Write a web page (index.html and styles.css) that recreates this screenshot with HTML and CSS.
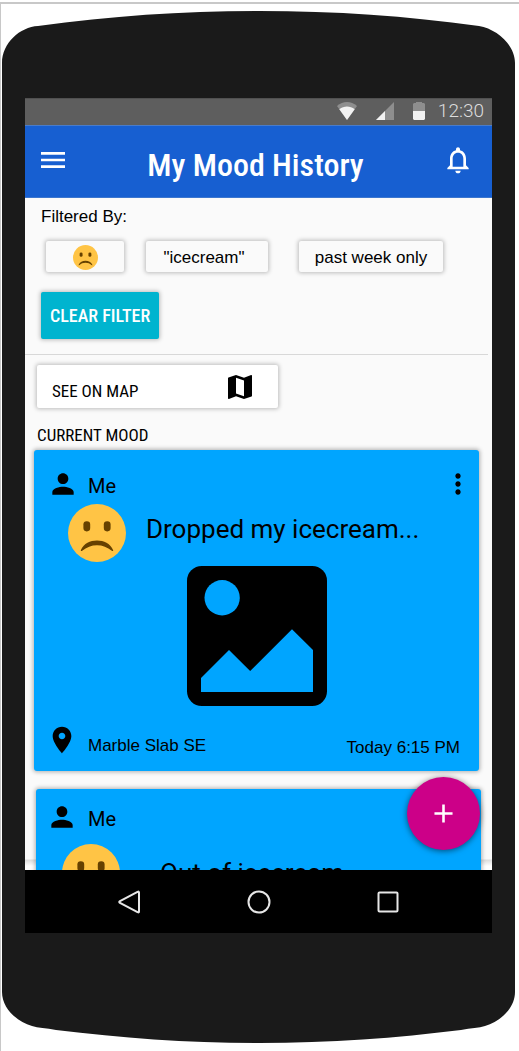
FILE: index.html
```html
<!DOCTYPE html>
<html lang="en">
<head>
<meta charset="utf-8">
<meta name="viewport" content="width=device-width, initial-scale=1">
<title>My Mood History</title>
<link rel="stylesheet" href="styles.css">
</head>
<body>
<svg class="defs" aria-hidden="true">
  <symbol id="face" viewBox="0 0 58 58">
    <circle cx="29" cy="29" r="29" fill="#ffc445"/>
    <rect x="15.4" y="17.2" width="6.8" height="10.2" rx="3.3" fill="#664100"/>
    <rect x="35.8" y="17.2" width="6.8" height="10.2" rx="3.3" fill="#664100"/>
    <path d="M12.8 46.2C16 39.5 22 36.6 29 36.6S42 39.5 45.200 46.200C45.300 47.200 44.400 47.300 43.800 46.800C39.500 43.200 34.500 41.200 29 41.200S18.500 43.200 14.200 46.800C13.600 47.300 12.700 47.200 12.800 46.200Z" fill="#664100"/>
  </symbol>
  <symbol id="person" viewBox="0 0 24 24">
    <path d="M12 12c2.210 0 4-1.790 4-4s-1.790-4-4-4-4 1.790-4 4 1.790 4 4 4zm0 2c-2.670 0-8 1.340-8 4v2h16v-2c0-2.660-5.330-4-8-4z"/>
  </symbol>
</svg>
<div class="phone">
  <svg class="cap" height="87" viewBox="0 0 513 87" preserveAspectRatio="none" aria-hidden="true">
    <path d="M0 88V52C0 32 18 16 36 15L36 15C110 5 180 0 257 0S404 5 477 15C495 18 513 34 513 52V88Z" fill="#1a1a1a"/>
  </svg>
  <div class="body">
    <div class="screen">
      <div class="status">
        <svg width="20" height="18" viewBox="0 0 20 18" aria-label="Wi-Fi"><path d="M0 4C6-1.300 14-1.300 20 4L10 18Z" fill="#8e8e8e"/><path d="M2.300 7.200C7 3.500 13 3.500 17.700 7.200L10 18Z" fill="#f2f2f2"/></svg>
        <svg width="18" height="18" viewBox="0 0 18 18" aria-label="Signal"><path d="M18 0V18H0Z" fill="#8e8e8e"/><path d="M9 9V18H0Z" fill="#f2f2f2"/></svg>
        <svg width="12" height="18" viewBox="0 0 12 18" aria-label="Battery"><path d="M3 0H9V1H11L12 2V9H0V2L1 1H3Z" fill="#8e8e8e"/><path d="M0 9H12V17L11 18H1L0 17Z" fill="#f2f2f2"/></svg>
        <time class="clock">12:30</time>
      </div>
      <header class="appbar">
        <button class="icon-btn" aria-label="Menu"><svg width="32" height="32" viewBox="0 0 24 24" fill="#fff"><path d="M3 18h18v-2H3v2zm0-5h18v-2H3v2zm0-7v2h18V6H3z"/></svg></button>
        <h1 class="title">My Mood History</h1>
        <button class="icon-btn" aria-label="Notifications"><svg width="32" height="32" viewBox="0 0 24 24" fill="#fff"><path d="M12 22c1.100 0 2-.9 2-2h-4c0 1.100.9 2 2 2zm6-6v-5c0-3.070-1.630-5.640-4.500-6.320V4c0-.83-.67-1.500-1.500-1.500s-1.500.67-1.500 1.500v.68C7.640 5.360 6 7.920 6 11v5l-2 2v1h16v-1l-2-2zm-2 1H8v-6c0-2.480 1.510-4.500 4-4.500s4 2.020 4 4.500v6z"/></svg></button>
      </header>
      <main class="feed">
        <section class="filters">
          <h2 class="filters-label">Filtered By:</h2>
          <div class="chips">
            <button class="chip chip-face" aria-label="Sad mood"><svg width="25" height="25"><use href="#face"/></svg></button>
            <button class="chip chip-word">"icecream"</button>
            <button class="chip chip-week">past week only</button>
          </div>
          <button class="clear">CLEAR FILTER</button>
        </section>
        <section class="moods">
          <button class="map-btn"><span class="map-label">SEE ON MAP</span><svg width="32" height="32" viewBox="0 0 24 24" aria-hidden="true"><path d="M20.500 3l-.16.030L15 5.100 9 3 3.360 4.900c-.21.070-.36.250-.36.480V20.500c0 .28.220.5.5.5l.16-.03L9 18.900l6 2.100 5.640-1.900c.21-.07.36-.25.36-.48V3.500c0-.28-.22-.5-.5-.5zM15 19l-6-2.110V5l6 2.110V19z"/></svg></button>
          <h2 class="heading">CURRENT MOOD</h2>
          <article class="card">
            <div class="card-head">
              <svg width="32" height="32" aria-hidden="true"><use href="#person"/></svg>
              <span class="who">Me</span>
              <button class="icon-btn" aria-label="More options"><svg width="32" height="32" viewBox="0 0 24 24"><path d="M12 8c1.100 0 2-.9 2-2s-.9-2-2-2-2 .9-2 2 .9 2 2 2zm0 2c-1.100 0-2 .9-2 2s.9 2 2 2 2-.9 2-2-.9-2-2-2zm0 6c-1.100 0-2 .9-2 2s.9 2 2 2 2-.9 2-2-.9-2-2-2z"/></svg></button>
            </div>
            <div class="mood">
              <svg width="58" height="58" aria-hidden="true"><use href="#face"/></svg>
              <h3 class="reason">Dropped my icecream...</h3>
            </div>
            <svg class="photo" width="140" height="140" viewBox="0 0 18 18" aria-label="Photo"><rect width="18" height="18" rx="1.900"/><circle cx="4.520" cy="4.080" r="2.270" fill="#00a5ff"/><path d="M1.800 14.400L5.400 10.800 8.120 13.500 13.500 8.130 16.200 10.800V16.200H1.800Z" fill="#00a5ff"/></svg>
            <div class="card-foot">
              <svg width="32" height="32" viewBox="0 0 24 24" aria-hidden="true"><path d="M12 2C8.130 2 5 5.130 5 9c0 5.250 7 13 7 13s7-7.750 7-13c0-3.870-3.130-7-7-7zm0 9.500c-1.380 0-2.500-1.120-2.500-2.500s1.120-2.500 2.500-2.500 2.500 1.120 2.500 2.500-1.120 2.500-2.500 2.500z"/></svg>
              <span class="place">Marble Slab SE</span>
              <time class="when">Today 6:15 PM</time>
            </div>
          </article>
          <article class="card card-next">
            <div class="card-head">
              <svg width="32" height="32" aria-hidden="true"><use href="#person"/></svg>
              <span class="who">Me</span>
            </div>
            <div class="mood">
              <svg width="58" height="58" aria-hidden="true"><use href="#face"/></svg>
              <h3 class="reason">Out of icecream...</h3>
            </div>
          </article>
        </section>
        <button class="fab" aria-label="Add mood"><svg width="31" height="31" viewBox="0 0 24 24" fill="#fff"><path d="M19 13h-6v6h-2v-6H5v-2h6V5h2v6h6v2z"/></svg></button>
      </main>
      <nav class="navbar">
        <button class="icon-btn" aria-label="Back"><svg width="26" height="26" viewBox="0 0 26 26"><path d="M23 3.500V22.500Q23 24 21.500 23L4 14Q2.500 13 4 12L21.500 3Q23 2 23 3.500Z"/></svg></button>
        <button class="icon-btn" aria-label="Home"><svg width="26" height="26" viewBox="0 0 26 26"><circle cx="13" cy="13" r="10.500"/></svg></button>
        <button class="icon-btn" aria-label="Recent apps"><svg width="26" height="26" viewBox="0 0 26 26"><rect x="3.500" y="3.500" width="19" height="19" rx="1"/></svg></button>
      </nav>
    </div>
  </div>
  <svg class="cap" height="110" viewBox="0 0 513 110" preserveAspectRatio="none" aria-hidden="true">
    <path d="M0-1V59C0 75 14 88 30 93C36 95 44 95 54 97C120 105 185 110 257 110S394 105 459 97C469 95 477 95 483 93C499 88 513 75 513 59V-1Z" fill="#1a1a1a"/>
  </svg>
</div>
</body>
</html>
```
FILE: styles.css
```css
* {
  box-sizing: border-box;
}

body {
  margin: 0;
  padding-top: 2px;
  background: #fff;
  color: #000;
  font-family: "Liberation Sans", Arial, sans-serif;
  font-size: 17px;
}

button {
  margin: 0;
  padding: 0;
  border: 0;
  background: none;
  color: inherit;
  font: inherit;
}

svg {
  display: block;
  flex: none;
}

h1,
h2,
h3 {
  margin: 0;
  font-weight: 400;
}

.defs {
  position: absolute;
  width: 0;
  height: 0;
}

.phone {
  display: flex;
  flex-direction: column;
  height: calc(100vh - 2px);
  min-height: 700px;
  padding: 7px 4px 8px 1px;
  border-top: 2px solid #c8c8c8;
  border-left: 1px solid #c8c8c8;
}

.cap {
  width: 100%;
}

.body {
  flex: 1;
  min-height: 0;
  padding: 0 23px;
  background: #1a1a1a;
}

.screen {
  display: flex;
  flex-direction: column;
  height: 100%;
}

.status {
  display: flex;
  align-items: center;
  justify-content: flex-end;
  gap: 19px;
  height: 27px;
  padding: 0 8px 2px 0;
  border-top: 1px solid #505050;
  background: #5e5e5e;
}

.clock {
  margin-left: -6px;
  color: #ddd;
  font: 300 19px/24px Roboto, sans-serif;
}

.appbar {
  display: flex;
  align-items: center;
  height: 73px;
  padding: 0 18px 4px 12px;
  border-top: 1px solid #4a7cc9;
  border-bottom: 1px solid #3c76cf;
  background: #175fd1;
}

.title {
  flex: 1;
  padding-top: 11px;
  color: #fff;
  font: 500 32px/40px "Roboto Condensed", "Liberation Sans Narrow", Roboto, sans-serif;
  text-align: center;
  white-space: nowrap;
}

.feed {
  position: relative;
  flex: 1;
  min-height: 0;
  overflow: hidden;
  background: linear-gradient(to top, #fff 0, #fff 4px, #ddd 10px, #fafafa 11px);
}

.filters {
  margin-right: 4px;
  padding: 8px 0 15px 16px;
  border-bottom: 1px solid #d8d8d8;
}

.filters-label {
  font-size: 17px;
  line-height: 22px;
}

.chips {
  display: flex;
  margin: 13px 0 20px 5px;
}

.chip,
.map-btn,
.clear {
  border-radius: 2px;
  box-shadow: 0 0 4px 1px rgba(0, 0, 0, 0.25);
}

.chip {
  display: flex;
  align-items: center;
  justify-content: center;
  height: 31px;
  padding-top: 3px;
  background: #fafafa;
  white-space: nowrap;
}

.chip-face {
  width: 78px;
  padding-top: 2px;
}

.chip-word {
  width: 122px;
  margin-left: 22px;
  padding-right: 6px;
}

.chip-week {
  width: 144px;
  margin-left: 31px;
}

.clear {
  display: block;
  height: 47px;
  padding: 0 9px;
  background: #00b4cf;
  color: #fff;
  font: 500 18px/24px "Roboto Condensed", "Liberation Sans Narrow", Roboto, sans-serif;
}

.moods {
  padding: 10px 13px 0 9px;
}

.map-btn {
  display: flex;
  align-items: center;
  justify-content: space-between;
  width: 241px;
  height: 43px;
  margin-left: 3px;
  padding: 0 22px 0 15px;
  background: #fff;
}

.map-label {
  padding-top: 9px;
}

.map-label,
.heading {
  font: 400 17px/20px "Roboto Condensed", "Liberation Sans Narrow", Roboto, sans-serif;
}

.heading {
  margin: 17px 0 5px 3px;
}

.card {
  padding: 18px 0 13px;
  border-radius: 3px;
  background: #00a5ff;
  box-shadow: 0 0 4px 1px rgba(0, 0, 0, 0.3);
}

.card-head {
  display: flex;
  align-items: center;
  gap: 9px;
  padding: 0 5px 0 13px;
}

.who {
  flex: 1;
  padding-top: 4px;
  font: 400 20px/24px Roboto, sans-serif;
}

.mood {
  display: flex;
  align-items: center;
  gap: 20px;
  margin: 4px 0 4px 34px;
}

.reason {
  padding-bottom: 8px;
  font: 400 26px/32px Roboto, sans-serif;
  white-space: nowrap;
}

.photo {
  margin: 0 auto 16px;
}

.card-foot {
  display: flex;
  align-items: center;
  gap: 10px;
  padding: 0 19px 0 12px;
}

.place {
  flex: 1;
  padding-top: 12px;
}

.when {
  padding-top: 16px;
}

.card-next {
  margin: 18px -2px 0 2px;
  padding-top: 12px;
}

.card-next .card-head {
  padding-left: 10px;
  gap: 10px;
}

.card-next .mood {
  gap: 40px;
  margin: 11px 0 0 26px;
}

.card-next .reason {
  padding-bottom: 0;
}

.fab {
  position: absolute;
  right: 12px;
  bottom: 20px;
  display: flex;
  align-items: center;
  justify-content: center;
  width: 73px;
  height: 73px;
  border-radius: 50%;
  background: #cc0088;
  box-shadow: 0 1px 6px rgba(0, 0, 0, 0.55);
}

.navbar {
  display: flex;
  align-items: center;
  justify-content: space-between;
  height: 63px;
  padding: 0 91px;
  background: #000;
}

.navbar svg {
  fill: none;
  stroke: #e6e6e6;
  stroke-width: 2;
}
```
